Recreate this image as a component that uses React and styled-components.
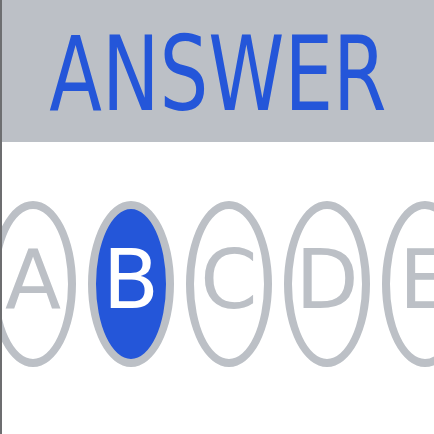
import React from "react";
import styled, { createGlobalStyle } from "styled-components";

const GlobalStyle = createGlobalStyle`
  body {
    margin: 0;
    overflow: hidden;
    background: #ffffff;
  }
`;

const options = ["A", "B", "C", "D", "E"];
const selected = "B";

const App = () => {
  return (
    <Page>
      <GlobalStyle />
      <Header>
        <Title>ANSWER</Title>
      </Header>
      <Choices>
        {options.map((item) => (
          <Bubble key={item} $active={item === selected}>
            {item}
          </Bubble>
        ))}
      </Choices>
    </Page>
  );
};

const Page = styled.div`
  position: relative;
  width: 434px;
  height: 434px;
  overflow: hidden;
  background: #ffffff;
  font-family: "DejaVu Sans", "Liberation Sans", sans-serif;

  &::before {
    content: "";
    position: absolute;
    left: 0;
    top: 0;
    bottom: 0;
    width: 2px;
    background: #6d6e70;
    z-index: 2;
  }
`;

const Header = styled.div`
  height: 142px;
  margin-left: 2px;
  background: #bcc0c6;
  display: flex;
  align-items: center;
  justify-content: center;
`;

const Title = styled.div`
  flex-shrink: 0;
  white-space: nowrap;
  font-size: 104px;
  line-height: 1;
  color: #2456d9;
  transform: scaleX(0.74);
  padding-top: 6px;
`;

const Choices = styled.div`
  display: flex;
  gap: 12px;
  margin-top: 59px;
  margin-left: -10px;
`;

const Bubble = styled.div`
  flex: 0 0 86px;
  height: 166px;
  box-sizing: border-box;
  border: 8px solid #bcc0c6;
  border-radius: 50%;
  background: ${(p) => (p.$active ? "#2456d9" : "#ffffff")};
  color: ${(p) => (p.$active ? "#ffffff" : "#bcc0c6")};
  display: flex;
  align-items: center;
  justify-content: center;
  font-size: 82px;
  line-height: 1;
  padding-bottom: 8px;
`;

export default App;
